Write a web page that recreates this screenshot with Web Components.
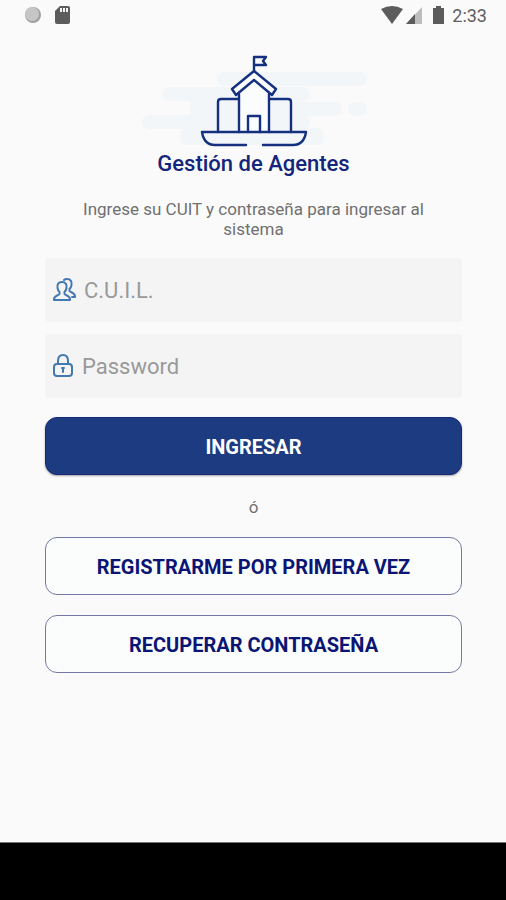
<!DOCTYPE html>
<html lang="es">
<head>
<meta charset="utf-8">
<meta name="viewport" content="width=device-width, initial-scale=1">
<title>Gestión de Agentes</title>
<style>
body { margin: 0; background: #fafafa; font-family: Roboto, "Liberation Sans", sans-serif; }
</style>
</head>
<body>
<agentes-app></agentes-app>
<script>
const define = (name, html, setup) => {
  const template = document.createElement('template');
  template.innerHTML = html;
  customElements.define(name, class extends HTMLElement {
    constructor() {
      super();
      this.attachShadow({ mode: 'open' }).append(template.content.cloneNode(true));
    }
    connectedCallback() { if (setup) setup(this, this.shadowRoot); }
  });
};

define('status-bar', `
<style>
:host { display: flex; justify-content: space-between; align-items: center; height: 32px; padding: 0 19px 0 22px; color: #5f5f5f; font-size: 18px; line-height: 32px; }
div { display: flex; align-items: center; }
svg { display: block; }
</style>
<div>
  <svg width="52" height="24" viewBox="0 1 52 24" aria-hidden="true">
    <circle cx="11" cy="12" r="8" fill="#a0a0a0"/>
    <circle cx="10" cy="11" r="7" fill="#c6c6c6"/>
    <path d="M38 3h8q2 0 2 2v14q0 2-2 2H35q-2 0-2-2V8z" fill="#5c5c5c"/>
    <path d="M38 5h2v4h-2zM41 5h2v4h-2zM44 5h2v4h-2z" fill="#f4f4f4"/>
  </svg>
</div>
<div>
  <svg width="72" height="24" viewBox="0 0 72 24" aria-hidden="true">
    <path d="M1 5Q12-1 23 5L12 20z" fill="#5c5c5c"/>
    <path d="M42 3v17H26z" fill="#bdbdbd"/>
    <path d="M35 10v10H26z" fill="#5c5c5c"/>
    <path d="M56 2h5v2h3v16H53V4h3z" fill="#5c5c5c"/>
  </svg>
  <span>2:33</span>
</div>`);

define('brand-logo', `
<style>
:host { display: flex; flex-direction: column; align-items: center; color: #14257c; }
svg { display: block; }
h1 { margin: 0; font-size: 22px; line-height: 28px; font-weight: 500; text-align: center; }
</style>
<svg width="250" height="105" viewBox="-1 0 250 105" aria-hidden="true">
  <g fill="#f2f6f8">
    <rect x="87" y="27" width="150" height="14" rx="7"/>
    <rect x="32" y="42" width="148" height="14" rx="7"/>
    <rect x="60" y="54" width="110" height="18"/>
    <rect x="12" y="70" width="168" height="14" rx="7"/>
    <rect x="130" y="57" width="82" height="14" rx="7"/>
    <rect x="218" y="57" width="19" height="14" rx="7"/>
    <rect x="50" y="83" width="144" height="17" rx="7"/>
  </g>
  <g fill="none" stroke="#14307f" stroke-width="2.4" stroke-linejoin="round" stroke-linecap="round">
    <path d="M124 26V12h12l-3 4 3 4h-12"/>
    <path d="M109 48l15-14 15 14v39h-30z" fill="#fafcfd" stroke="none"/>
    <path d="M109 87V49M139 49v38"/>
    <path d="M124 26l-22 18 4 6 18-15 18 15 4-6z" fill="#fafcfd"/>
    <path d="M109 54H91q-3 0-3 3v30M139 54h19q3 0 3 3v30"/>
    <path d="M118 87V71h12v16"/>
    <path d="M116 100H85q-11 0-13-13h104q-2 13-13 13h-30"/>
  </g>
</svg>
<h1><slot></slot></h1>`);

define('icon-field', `
<style>
:host { display: block; }
label { display: flex; align-items: center; gap: 7px; height: 64px; padding: 0 8px; box-sizing: border-box; background: #f4f4f4; border-radius: 4px; }
slot { display: block; flex: none; }
input { flex: 1; min-width: 0; border: 0; padding: 2px 0 0; background: none; outline: none; font: 22px/28px Roboto, "Liberation Sans", sans-serif; color: #444; }
input::placeholder { color: #999; opacity: 1; }
</style>
<label><slot></slot><input></label>`, (host, root) => {
  const input = root.querySelector('input');
  input.placeholder = host.getAttribute('label');
  input.type = host.getAttribute('type') || 'text';
  input.setAttribute('aria-label', host.getAttribute('label'));
});

define('action-button', `
<style>
:host { display: block; }
button { display: block; width: 100%; height: 58px; box-sizing: border-box; padding: 2px 16px 0; border: 1px solid #7478a8; border-radius: 12px; background: #fbfcfc; color: #0b1573; font: 700 20px/24px Roboto, "Liberation Sans", sans-serif; cursor: pointer; }
:host([primary]) button { background: #1d3b80; border-color: #14297a; color: #fff; box-shadow: 0 1px 2px rgba(0,0,0,.35); }
</style>
<button type="button"><slot></slot></button>`);

define('login-form', `
<style>
:host { display: flex; flex-direction: column; padding: 13px 44px 24px 45px; }
p { margin: 0; color: #707070; font-size: 17px; line-height: 20px; text-align: center; }
.intro { padding: 21px 32px 19px; }
.fields { display: grid; gap: 12px; }
.primary { padding-top: 19px; }
.or { padding: 22px 0 20px; }
.more { display: grid; gap: 20px; }
svg { display: block; fill: none; stroke: #4379b1; stroke-width: 2; stroke-linejoin: round; stroke-linecap: round; }
</style>
<brand-logo>Gestión de Agentes</brand-logo>
<p class="intro">Ingrese su CUIT y contraseña para ingresar al sistema</p>
<div class="fields">
  <icon-field label="C.U.I.L.">
    <svg width="24" height="24" viewBox="0 0 24 24" aria-hidden="true">
      <path d="M9 4c-4 0-5 3-4.500 6 .3 2 1 3 2 4v2c-1 1.500-5 1.500-5.500 5v1h16v-1c-.5-3.500-4.500-3.500-5.500-5v-2c1-1 1.700-2 2-4C14 7 13 4 9 4z"/>
      <path d="M11 2c1-1 2-1 3-1 4 0 5 3 4.500 6-.3 2-1 3-2 4v2c1 1.500 5 1.500 5.500 5v1h-3"/>
    </svg>
  </icon-field>
  <icon-field label="Password" type="password">
    <svg width="22" height="24" viewBox="0 0 22 24" aria-hidden="true">
      <rect x="1" y="10" width="18" height="12" rx="3"/>
      <path d="M5 10V7q0-6 5-6t5 6v3M10 14v4"/>
      <path d="M9 14h2"/>
    </svg>
  </icon-field>
</div>
<div class="primary"><action-button primary>INGRESAR</action-button></div>
<p class="or">ó</p>
<div class="more">
  <action-button>REGISTRARME POR PRIMERA VEZ</action-button>
  <action-button>RECUPERAR CONTRASEÑA</action-button>
</div>`);

define('agentes-app', `
<style>
:host { display: flex; flex-direction: column; min-height: 100vh; background: #fafafa; }
main { flex: 1; }
footer { height: 57px; background: #000; border-top: 1px solid #777; }
</style>
<status-bar></status-bar>
<main><login-form></login-form></main>
<footer></footer>`);
</script>
</body>
</html>
